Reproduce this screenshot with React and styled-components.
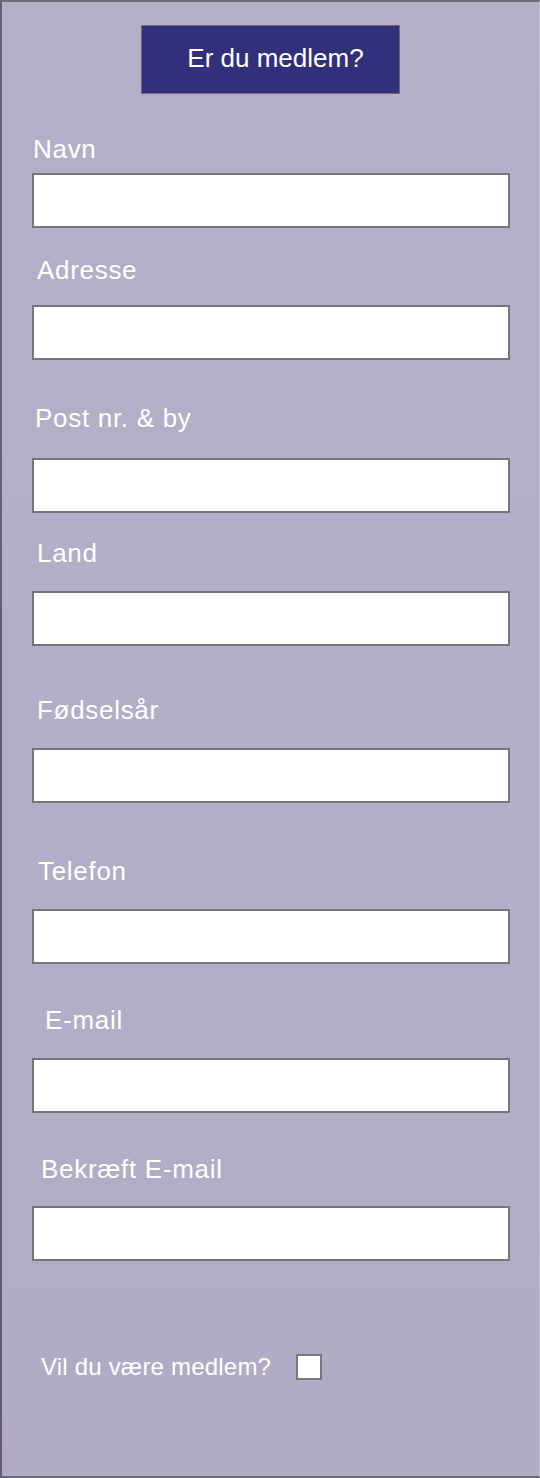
import React, { useState } from 'react';
import styled, { createGlobalStyle } from 'styled-components';

const GlobalStyle = createGlobalStyle`
  html, body { margin: 0; padding: 0; }
  body { font-family: "Liberation Sans", Arial, Helvetica, sans-serif; }
`;

const Page = styled.div`
  box-sizing: border-box;
  width: 540px; height: 1478px;
  background: linear-gradient(180deg, #b4afc8 0%, #b3aec7 70%, #b0aac3 100%);
  border-top: 2px solid #6e6b76;
  border-bottom: 2px solid #6b6874;
  border-left: 2px solid #675b7c;
  border-right: 1px solid #c4c0d2;
  padding: 23px 0 0 30px;
  display: flex; flex-direction: column;
`;

const MemberButton = styled.button`
  box-sizing: border-box;
  align-self: flex-start;
  margin-left: 109px;
  width: 259px; height: 69px;
  background: #322f7b;
  border: 1px solid #6d6a80;
  color: #fff;
  font-family: inherit; font-size: 26px;
  padding: 0 0 2px 10px;
  cursor: pointer;
`;

const Field = styled.div`
  display: flex; flex-direction: column;
  margin-top: ${p => p.$mt}px;
`;

const Label = styled.label`
  color: #fff;
  font-size: 26px; line-height: 30px;
  letter-spacing: 0.7px;
  padding-left: ${p => p.$indent}px;
  margin-bottom: ${p => p.$gap}px;
`;

const Input = styled.input`
  box-sizing: border-box;
  width: 478px; height: 55px;
  background: #fff;
  border: 2px solid #767579;
  padding: 0 10px;
  font-family: inherit; font-size: 20px;
  outline: none;
`;

const CheckRow = styled.label`
  display: flex; align-items: center; gap: 25px;
  margin-top: 92px;
  padding-left: 9px;
  color: #fff;
  font-size: 24px; line-height: 28px;
  letter-spacing: 0.2px;
`;

const CheckBox = styled.input`
  appearance: none; -webkit-appearance: none;
  box-sizing: border-box;
  width: 26px; height: 26px; margin: 0;
  background: #fff;
  border: 2px solid #7a787e;
  cursor: pointer;
  &:checked { background: #322f7b; }
`;

const fields = [
  { label: 'Navn', mt: 40, gap: 9, indent: 1 },
  { label: 'Adresse', mt: 27, gap: 20, indent: 5 },
  { label: 'Post nr. & by', mt: 43, gap: 25, indent: 3 },
  { label: 'Land', mt: 25, gap: 23, indent: 5 },
  { label: 'Fødselsår', mt: 49, gap: 23, indent: 5 },
  { label: 'Telefon', mt: 53, gap: 23, indent: 6 },
  { label: 'E-mail', mt: 41, gap: 23, indent: 13 },
  { label: 'Bekræft E-mail', mt: 41, gap: 22, indent: 9 },
];

const App = () => {
  const [values, setValues] = useState({});
  const [member, setMember] = useState(false);

  return (
    <>
      <GlobalStyle />
      <Page>
        <MemberButton type="button">Er du medlem?</MemberButton>
        {fields.map((f, i) => (
          <Field key={f.label} $mt={f.mt}>
            <Label htmlFor={`f${i}`} $indent={f.indent} $gap={f.gap}>{f.label}</Label>
            <Input
              id={`f${i}`}
              value={values[f.label] || ''}
              onChange={(e) => setValues({ ...values, [f.label]: e.target.value })}
            />
          </Field>
        ))}
        <CheckRow>
          Vil du være medlem?
          <CheckBox type="checkbox" checked={member} onChange={(e) => setMember(e.target.checked)} />
        </CheckRow>
      </Page>
    </>
  );
};

export default App;
